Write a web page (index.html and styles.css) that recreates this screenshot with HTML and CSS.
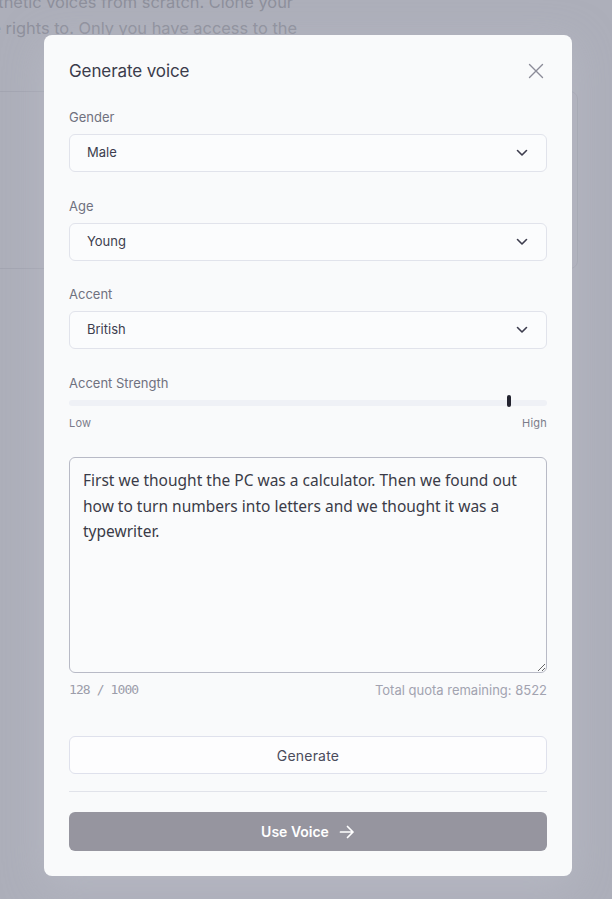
FILE: index.html
```html
<!DOCTYPE html>
<html lang="en">
<head>
<meta charset="utf-8">
<title>Generate voice</title>
<link rel="stylesheet" href="styles.css">
</head>
<body>
<div class="page">
  <div class="intro">
    <span class="line l1">Create synthetic voices from scratch. Clone your</span>
    <span class="line">own voice or voices you have the rights to. Only you have access to the</span>
  </div>
  <div class="bg-card"></div>
</div>

<div class="overlay">
  <div class="modal">
    <div class="modal-head">
      <h2 class="title">Generate voice</h2>
      <svg class="close" width="16" height="16" viewBox="0 0 16 16"><path d="M1.5 1.5 L14.5 14.5 M14.5 1.5 L1.5 14.5" stroke="#8b8c98" stroke-width="1.4" fill="none" stroke-linecap="round"/></svg>
    </div>

    <div class="field">
      <label class="label">Gender</label>
      <div class="select"><span>Male</span><svg width="12" height="8" viewBox="0 0 12 8"><path d="M1.5 1.5 L6 6 L10.5 1.5" stroke="#3d3d4e" stroke-width="1.6" fill="none" stroke-linecap="round" stroke-linejoin="round"/></svg></div>
    </div>

    <div class="field">
      <label class="label">Age</label>
      <div class="select"><span>Young</span><svg width="12" height="8" viewBox="0 0 12 8"><path d="M1.5 1.5 L6 6 L10.5 1.5" stroke="#3d3d4e" stroke-width="1.6" fill="none" stroke-linecap="round" stroke-linejoin="round"/></svg></div>
    </div>

    <div class="field tight">
      <label class="label">Accent</label>
      <div class="select"><span>British</span><svg width="12" height="8" viewBox="0 0 12 8"><path d="M1.5 1.5 L6 6 L10.5 1.5" stroke="#3d3d4e" stroke-width="1.6" fill="none" stroke-linecap="round" stroke-linejoin="round"/></svg></div>
    </div>

    <div class="field slider-field">
      <label class="label">Accent Strength</label>
      <div class="track"><span class="thumb" style="left: 91.6%"></span></div>
      <div class="range-labels"><span>Low</span><span>High</span></div>
    </div>

    <textarea class="text">First we thought the PC was a calculator. Then we found out how to turn numbers into letters and we thought it was a typewriter.</textarea>
    <div class="meta"><span class="count">128 / 1000</span><span>Total quota remaining: 8522</span></div>

    <button class="btn-generate">Generate</button>
    <hr class="divider">
    <button class="btn-use">Use Voice
      <svg width="16" height="14" viewBox="0 0 16 14"><path d="M1.5 7 H14 M8.5 1.5 L14 7 L8.5 12.5" stroke="#ffffff" stroke-width="1.7" fill="none" stroke-linecap="round" stroke-linejoin="round"/></svg>
    </button>
  </div>
</div>
</body>
</html>
```

FILE: styles.css
```css
* { box-sizing: border-box; }
html, body { margin: 0; padding: 0; }
body {
  width: 612px;
  height: 899px;
  overflow: hidden;
  background: #adafba;
  font-family: Inter, "Noto Sans", sans-serif;
  position: relative;
}

.intro {
  width: 297px;
  margin-top: -11px;
  display: flex;
  flex-direction: column;
  align-items: flex-end;
  font-size: 16.4px;
  line-height: 26px;
  color: #8e909c;
  white-space: nowrap;
}
.intro .l1 { margin-right: 4px; }

.bg-card {
  margin-top: 50px;
  margin-left: -10px;
  width: 588px;
  height: 178px;
  border: 1px solid #a3a5b1;
  border-radius: 8px;
}

.overlay {
  position: absolute;
  inset: 0;
  padding: 35px 0 0 44px;
}

.modal {
  width: 528px;
  height: 841px;
  background: #f9fafb;
  border-radius: 8px;
  padding: 25px 25px;
  display: flex;
  flex-direction: column;
  box-shadow: 0 10px 40px rgba(190, 192, 202, 0.55);
}

.modal-head {
  display: flex;
  justify-content: space-between;
  align-items: center;
  height: 22px;
}
.title {
  margin: 0;
  font-size: 17px;
  font-weight: 400;
  color: #3b3c4b;
  letter-spacing: -0.1px;
}
.close { margin-right: 3px; }

.field {
  display: flex;
  flex-direction: column;
  margin-top: 27px;
}
.field + .field { margin-top: 26px; }
.field.tight { margin-top: 25px; }
.label {
  font-size: 13px;
  line-height: 16px;
  color: #70717f;
  margin-bottom: 9px;
}
.select {
  height: 38px;
  background: #fbfcfd;
  border: 1px solid #e1e3eb;
  border-radius: 6px;
  display: flex;
  align-items: center;
  justify-content: space-between;
  padding: 0 18px 3px 17px;
  font-size: 13px;
  color: #3d3e4e;
}
.select svg { margin-top: 3px; }

.track {
  position: relative;
  height: 6px;
  border-radius: 3px;
  background: #eff1f6;
}
.thumb {
  position: absolute;
  top: -5px;
  width: 4px;
  height: 12px;
  border-radius: 2px;
  background: #23232f;
}
.range-labels {
  display: flex;
  justify-content: space-between;
  margin-top: 10px;
  font-size: 11px;
  line-height: 14px;
  color: #7b7c89;
  letter-spacing: 0.2px;
}

.text {
  margin-top: 27px;
  width: 478px;
  height: 216px;
  border: 1px solid #b8bac6;
  border-radius: 6px;
  background: #fafbfc;
  padding: 10px 13px;
  font-family: "Noto Sans", sans-serif;
  font-size: 15.5px;
  line-height: 25.5px;
  color: #3a3b48;
  resize: vertical;
  outline: none;
}

.meta {
  display: flex;
  justify-content: space-between;
  margin-top: 9px;
  font-size: 13px;
  line-height: 16px;
  color: #a2a3b0;
}
.count { font-family: "DejaVu Sans Mono", monospace; font-size: 13px; letter-spacing: -0.9px; color: #9c9daa; }

.btn-generate {
  margin-top: 38px;
  height: 38px;
  background: #fdfdfe;
  border: 1px solid #dfe1ec;
  border-radius: 6px;
  font-family: Inter, sans-serif;
  font-size: 14px;
  color: #4a4b5b;
  letter-spacing: 0.2px;
}

.divider {
  margin: 17px 0 0;
  border: 0;
  border-top: 1px solid #e1e3ea;
}

.btn-use {
  margin-top: 20px;
  height: 39px;
  background: #96959f;
  border: 0;
  border-radius: 6px;
  font-family: Inter, sans-serif;
  font-weight: 600;
  font-size: 14px;
  color: #ffffff;
  display: flex;
  align-items: center;
  justify-content: center;
  gap: 10px;
}
```
